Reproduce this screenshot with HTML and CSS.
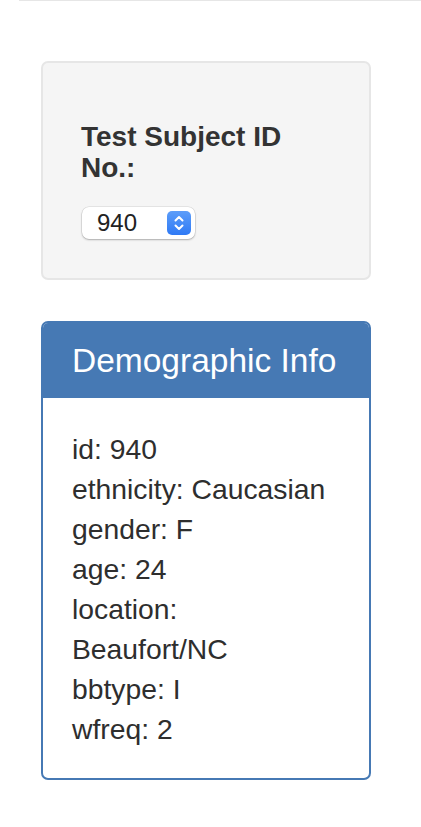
FILE: index.html
```html
<!DOCTYPE html>
<html lang="en">
<head>
<meta charset="utf-8">
<title>Demographic Info</title>
<link rel="stylesheet" href="styles.css">
</head>
<body>
<div class="topbar"></div>
<div class="sidebar">
  <div class="well">
    <label class="control-label" for="selDataset">Test Subject ID No.:</label>
    <div class="select" id="selDataset">
      <span class="select-value">940</span>
      <span class="stepper">
        <svg width="24" height="24" viewBox="0 0 24 24" aria-hidden="true">
          <path d="M8.5 9.5 L12 6 L15.5 9.5" fill="none" stroke="#fff" stroke-width="2" stroke-linecap="round" stroke-linejoin="round"/>
          <path d="M8.5 14.5 L12 18 L15.5 14.5" fill="none" stroke="#fff" stroke-width="2" stroke-linecap="round" stroke-linejoin="round"/>
        </svg>
      </span>
    </div>
  </div>
  <div class="panel">
    <div class="panel-heading">
      <h3 class="panel-title">Demographic Info</h3>
    </div>
    <div class="panel-body">
      <div class="meta-row">id: 940</div>
      <div class="meta-row">ethnicity: Caucasian</div>
      <div class="meta-row">gender: F</div>
      <div class="meta-row">age: 24</div>
      <div class="meta-row">location: Beaufort/NC</div>
      <div class="meta-row">bbtype: I</div>
      <div class="meta-row">wfreq: 2</div>
    </div>
  </div>
</div>
</body>
</html>
```
FILE: styles.css
```css
html, body {
  margin: 0;
  padding: 0;
  background: #ffffff;
}

body {
  font-family: "Liberation Sans", Arial, Helvetica, sans-serif;
  color: #333333;
}

.topbar {
  height: 1px;
  margin-left: 19px;
  background: #e6e6e6;
}

.sidebar {
  width: 330px;
  margin-left: 41px;
  margin-top: 60px;
  display: flex;
  flex-direction: column;
  gap: 41px;
}

.well {
  background: #f5f5f5;
  border: 2px solid #e6e6e6;
  border-radius: 7px;
  padding: 58px 38px 39px 38px;
  display: flex;
  flex-direction: column;
  align-items: flex-start;
}

.control-label {
  display: block;
  font-size: 28px;
  font-weight: bold;
  line-height: 31px;
  color: #333333;
}

.select {
  margin-top: 24px;
  margin-left: 1px;
  width: 113px;
  height: 32px;
  box-sizing: border-box;
  background: #ffffff;
  border-radius: 7px;
  box-shadow: 0 0 0 0.5px rgba(0, 0, 0, 0.12), 0 1px 2px rgba(0, 0, 0, 0.25);
  display: flex;
  align-items: center;
  justify-content: space-between;
  padding: 0 4px 0 15px;
}

.select-value {
  font-size: 24px;
  line-height: 32px;
  color: #222222;
}

.stepper {
  width: 24px;
  height: 24px;
  border-radius: 5px;
  background: linear-gradient(#5c9df9, #2f7af5);
  display: flex;
}

.panel {
  border: 2px solid #4679b4;
  border-radius: 7px;
  overflow: hidden;
}

.panel-heading {
  background: #4679b4;
  padding: 20px 29px 20px 29px;
}

.panel-title {
  margin: 0;
  font-size: 33.5px;
  font-weight: normal;
  line-height: 35px;
  color: #ffffff;
}

.panel-body {
  padding: 31px 35px 29px 29px;
  font-size: 28.3px;
  line-height: 40px;
  color: #2e2e2e;
}
```
